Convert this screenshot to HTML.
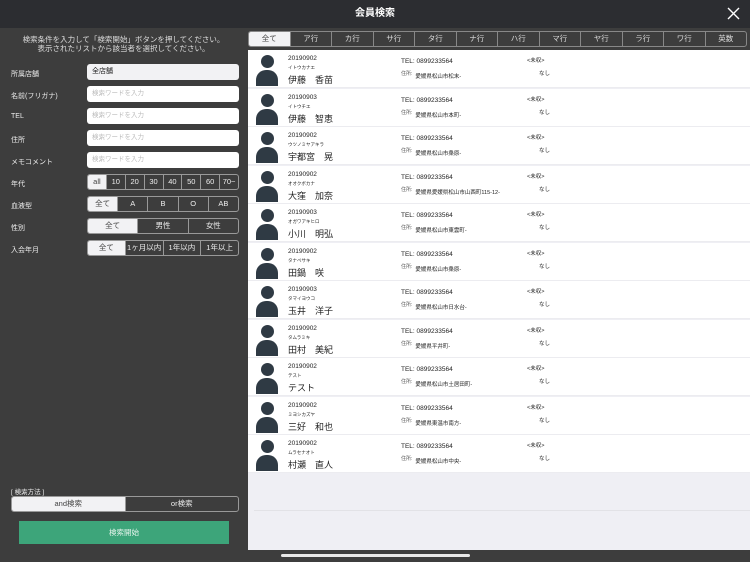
<!DOCTYPE html>
<html><head><meta charset="utf-8"><style>
*{margin:0;padding:0;box-sizing:border-box}
body{width:750px;height:562px;background:#3d3d3d;font-family:"Liberation Sans","Noto Sans CJK JP",sans-serif;position:relative;overflow:hidden;color:#fff}
.hdr{position:absolute;left:0;top:0;width:750px;height:28px;background:#2c2d31;text-align:center;font-size:10px;line-height:28px;font-weight:bold}
.x{position:absolute;right:10px;top:7px}
.msg{position:absolute;left:0;top:35px;width:247px;text-align:center;font-size:7.5px;line-height:9px;color:#ddd}
.lbl{position:absolute;left:11px;font-size:7px;color:#eee}
.inp{position:absolute;left:87px;width:152px;height:16px;background:#fff;border-radius:3px;font-size:6.5px;color:#bbb;padding-left:5px;line-height:16px}
.seg{position:absolute;left:87px;width:152px;height:16px;border:1px solid #999;border-radius:3px;display:flex;overflow:hidden}
.seg div{flex:1;text-align:center;font-size:7.5px;line-height:14px;color:#eee;border-left:1px solid #999}
.seg div:first-child{border-left:none;background:#f2f2f4;color:#444}
.tabs{position:absolute;left:248px;top:31px;width:499px;height:16px;border:1px solid #888;border-radius:3px;display:flex;overflow:hidden}
.tabs div{flex:1;text-align:center;font-size:7.5px;line-height:14px;color:#ddd;border-left:1px solid #888}
.tabs div:first-child{border-left:none;background:#f2f2f4;color:#444}
.list{position:absolute;left:248px;top:50px;width:502px;height:500px;background:#efeff4}
.row{position:absolute;left:0;width:502px;height:38px;background:#fff;color:#222;border-bottom:1px solid #ececf0}
.av{position:absolute;left:8px;top:5px;width:22px;height:30px}
.av i{position:absolute;left:5px;top:0;width:13px;height:13px;border-radius:50%;background:#2f3a44}
.av b{position:absolute;left:0;top:15px;width:22px;height:16px;border-radius:10px 10px 0 0;background:#2f3a44}
.id{position:absolute;left:40px;top:5px;font-size:6.5px}
.kn{position:absolute;left:40px;top:15px;font-size:4.5px}
.nm{position:absolute;left:40px;top:23px;font-size:9px}
.tel{position:absolute;left:153px;top:8px;font-size:6.5px}
.ad{position:absolute;left:153px;top:19px;font-size:5px;color:#555}
.ad span{font-size:5.5px;color:#222;position:relative;top:3px;margin-left:3px}
.mi{position:absolute;left:279px;top:6px;font-size:5.5px}
.ns{position:absolute;left:291px;top:19px;font-size:5.5px}
</style></head><body>
<div class="hdr">会員検索<svg class="x" width="13" height="13" viewBox="0 0 13 13"><path d="M1 1L12 12M12 1L1 12" stroke="#fff" stroke-width="1.4"/></svg></div>
<div class="msg">検索条件を入力して「検索開始」ボタンを押してください。<br>表示されたリストから該当者を選択してください。</div>
<div class="lbl" style="top:69px">所属店舗</div><div class="inp" style="top:64px;color:#222;background:#f2f2f4;font-size:7px">全店舗</div>
<div class="lbl" style="top:91px">名前(フリガナ)</div><div class="inp" style="top:86px">検索ワードを入力</div>
<div class="lbl" style="top:113px">TEL</div><div class="inp" style="top:108px">検索ワードを入力</div>
<div class="lbl" style="top:135px">住所</div><div class="inp" style="top:130px">検索ワードを入力</div>
<div class="lbl" style="top:157px">メモコメント</div><div class="inp" style="top:152px">検索ワードを入力</div>
<div class="lbl" style="top:179px">年代</div><div class="seg" style="top:174px"><div>all</div><div>10</div><div>20</div><div>30</div><div>40</div><div>50</div><div>60</div><div>70~</div></div>
<div class="lbl" style="top:201px">血液型</div><div class="seg" style="top:196px"><div>全て</div><div>A</div><div>B</div><div>O</div><div>AB</div></div>
<div class="lbl" style="top:223px">性別</div><div class="seg" style="top:218px"><div>全て</div><div>男性</div><div>女性</div></div>
<div class="lbl" style="top:245px">入会年月</div><div class="seg" style="top:240px"><div>全て</div><div>1ヶ月以内</div><div>1年以内</div><div>1年以上</div></div>
<div class="lbl" style="top:486px;font-size:6.5px">[ 検索方法 ]</div>
<div class="seg" style="top:496px;left:11px;width:228px"><div>and検索</div><div>or検索</div></div>
<div style="position:absolute;left:19px;top:521px;width:210px;height:23px;background:#3da57a;color:#e8f5ee;font-size:7.5px;text-align:center;line-height:23px">検索開始</div>
<div class="tabs"><div>全て</div><div>ア行</div><div>カ行</div><div>サ行</div><div>タ行</div><div>ナ行</div><div>ハ行</div><div>マ行</div><div>ヤ行</div><div>ラ行</div><div>ワ行</div><div>英数</div></div>
<div class="list">
<div class="row" style="top:0"><div class="av"><i></i><b></b></div><div class="id">20190902</div><div class="kn">イトウカナエ</div><div class="nm">伊藤　香苗</div><div class="tel">TEL: 0899233564</div><div class="ad">住所:<span>愛媛県松山市松末-</span></div><div class="mi">&lt;未収&gt;</div><div class="ns">なし</div></div>
<div class="row" style="top:38.5px"><div class="av"><i></i><b></b></div><div class="id">20190903</div><div class="kn">イトウチエ</div><div class="nm">伊藤　智恵</div><div class="tel">TEL: 0899233564</div><div class="ad">住所:<span>愛媛県松山市本町-</span></div><div class="mi">&lt;未収&gt;</div><div class="ns">なし</div></div>
<div class="row" style="top:77px"><div class="av"><i></i><b></b></div><div class="id">20190902</div><div class="kn">ウツノミヤアキラ</div><div class="nm">宇都宮　晃</div><div class="tel">TEL: 0899233564</div><div class="ad">住所:<span>愛媛県松山市桑原-</span></div><div class="mi">&lt;未収&gt;</div><div class="ns">なし</div></div>
<div class="row" style="top:115.5px"><div class="av"><i></i><b></b></div><div class="id">20190902</div><div class="kn">オオクボカナ</div><div class="nm">大窪　加奈</div><div class="tel">TEL: 0899233564</div><div class="ad">住所:<span>愛媛県愛媛県松山市山西町115-12-</span></div><div class="mi">&lt;未収&gt;</div><div class="ns">なし</div></div>
<div class="row" style="top:154px"><div class="av"><i></i><b></b></div><div class="id">20190903</div><div class="kn">オガワアキヒロ</div><div class="nm">小川　明弘</div><div class="tel">TEL: 0899233564</div><div class="ad">住所:<span>愛媛県松山市東雲町-</span></div><div class="mi">&lt;未収&gt;</div><div class="ns">なし</div></div>
<div class="row" style="top:192.5px"><div class="av"><i></i><b></b></div><div class="id">20190902</div><div class="kn">タナベサキ</div><div class="nm">田鍋　咲</div><div class="tel">TEL: 0899233564</div><div class="ad">住所:<span>愛媛県松山市桑原-</span></div><div class="mi">&lt;未収&gt;</div><div class="ns">なし</div></div>
<div class="row" style="top:231px"><div class="av"><i></i><b></b></div><div class="id">20190903</div><div class="kn">タマイヨウコ</div><div class="nm">玉井　洋子</div><div class="tel">TEL: 0899233564</div><div class="ad">住所:<span>愛媛県松山市日水台-</span></div><div class="mi">&lt;未収&gt;</div><div class="ns">なし</div></div>
<div class="row" style="top:269.5px"><div class="av"><i></i><b></b></div><div class="id">20190902</div><div class="kn">タムラミキ</div><div class="nm">田村　美紀</div><div class="tel">TEL: 0899233564</div><div class="ad">住所:<span>愛媛県平井町-</span></div><div class="mi">&lt;未収&gt;</div><div class="ns">なし</div></div>
<div class="row" style="top:308px"><div class="av"><i></i><b></b></div><div class="id">20190902</div><div class="kn">テスト</div><div class="nm">テスト</div><div class="tel">TEL: 0899233564</div><div class="ad">住所:<span>愛媛県松山市土居田町-</span></div><div class="mi">&lt;未収&gt;</div><div class="ns">なし</div></div>
<div class="row" style="top:346.5px"><div class="av"><i></i><b></b></div><div class="id">20190902</div><div class="kn">ミヨシカズヤ</div><div class="nm">三好　和也</div><div class="tel">TEL: 0899233564</div><div class="ad">住所:<span>愛媛県東温市南方-</span></div><div class="mi">&lt;未収&gt;</div><div class="ns">なし</div></div>
<div class="row" style="top:385px"><div class="av"><i></i><b></b></div><div class="id">20190902</div><div class="kn">ムラセナオト</div><div class="nm">村瀬　直人</div><div class="tel">TEL: 0899233564</div><div class="ad">住所:<span>愛媛県松山市中央-</span></div><div class="mi">&lt;未収&gt;</div><div class="ns">なし</div></div>
<div style="position:absolute;left:6px;top:460px;width:496px;height:1px;background:#e2e2e6"></div>
</div>
<div style="position:absolute;left:281px;top:554px;width:189px;height:3px;border-radius:2px;background:#e8e8e8"></div>
</body></html>
